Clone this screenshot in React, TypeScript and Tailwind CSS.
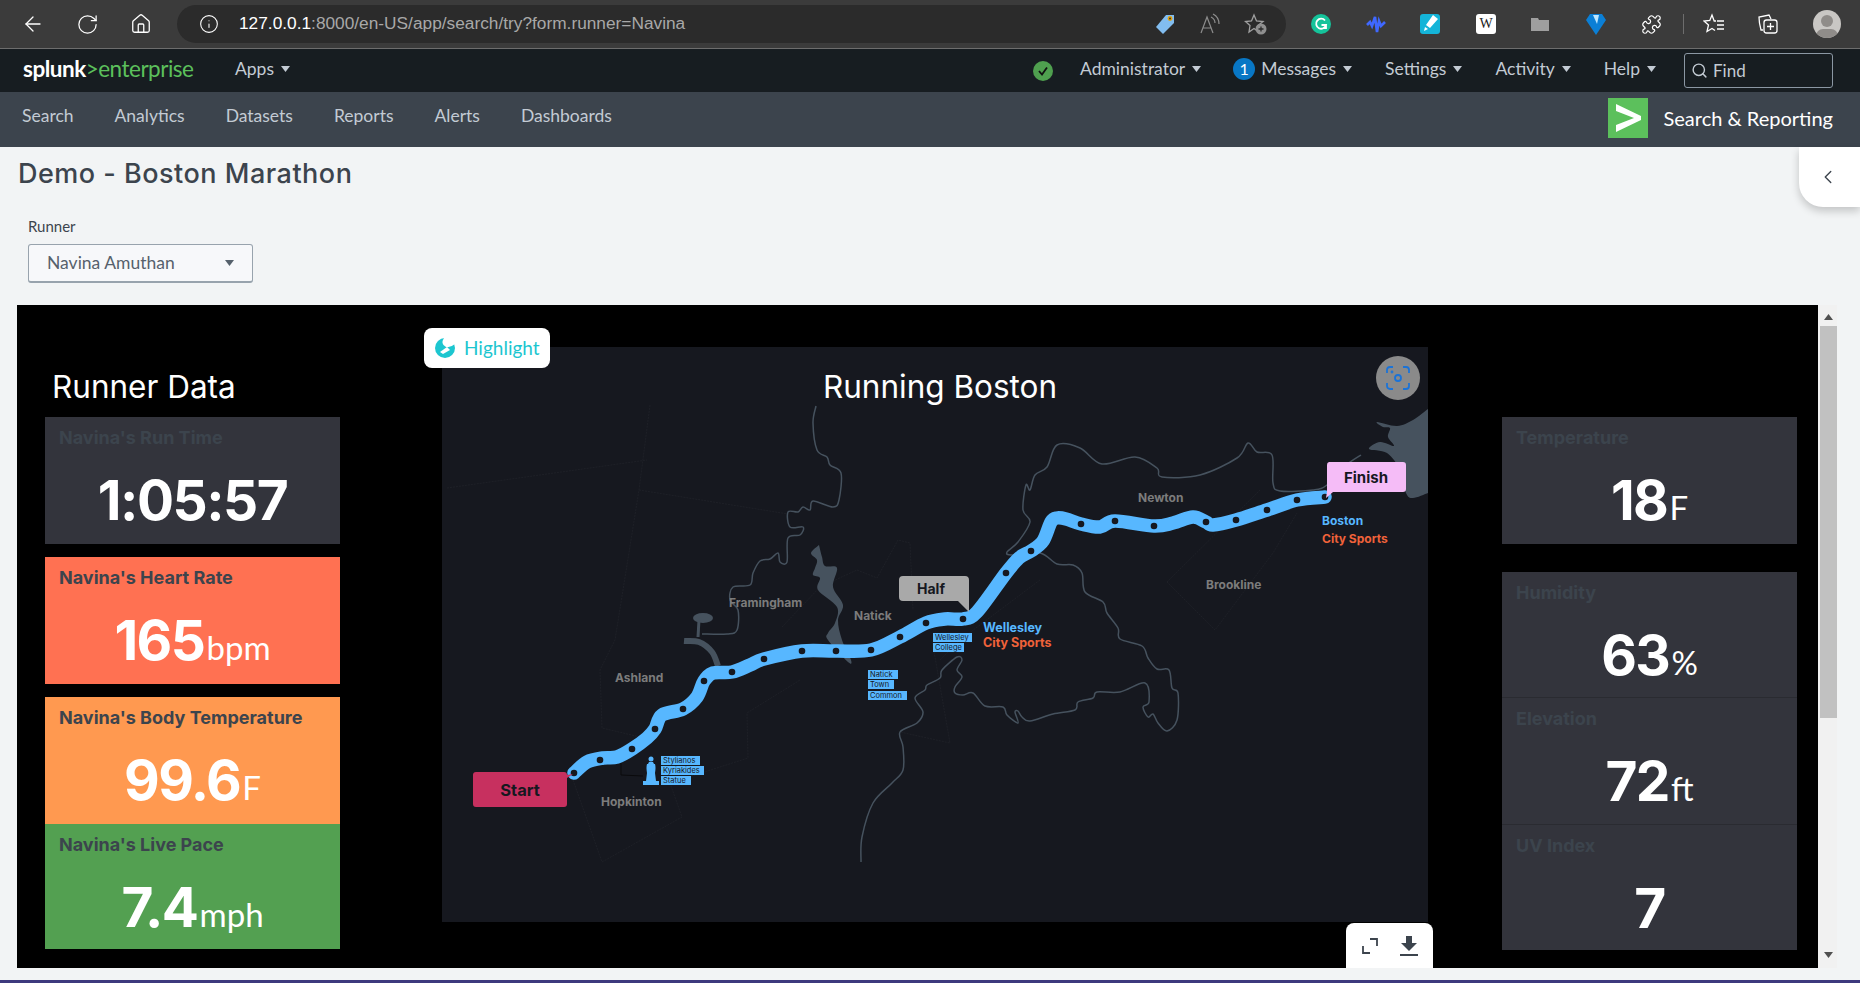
import React from "react";
import { ArrowLeft, RotateCw, House, Info, Search, ChevronLeft, Puzzle } from "lucide-react";

type P = [number, number];

function smooth(pts: P[]): string {
  let d = `M${pts[0][0]} ${pts[0][1]}`;
  for (let i = 0; i < pts.length - 1; i++) {
    const p0 = pts[Math.max(i - 1, 0)];
    const p1 = pts[i];
    const p2 = pts[i + 1];
    const p3 = pts[Math.min(i + 2, pts.length - 1)];
    const c1x = p1[0] + (p2[0] - p0[0]) / 6;
    const c1y = p1[1] + (p2[1] - p0[1]) / 6;
    const c2x = p2[0] - (p3[0] - p1[0]) / 6;
    const c2y = p2[1] - (p3[1] - p1[1]) / 6;
    d += ` C${c1x.toFixed(1)} ${c1y.toFixed(1)} ${c2x.toFixed(1)} ${c2y.toFixed(1)} ${p2[0]} ${p2[1]}`;
  }
  return d;
}

const route: P[] = [
  [574, 773], [587, 762], [603, 758], [617, 757], [632, 749], [647, 738], [655, 729], [662, 715], [683, 709], [697, 697], [704, 681], [713, 673], [732, 672], [750, 665], [764, 659], [802, 651], [836, 651], [871, 650], [900, 637], [926, 623], [945, 619], [963, 619], [977, 612], [1006, 573], [1019, 558], [1031, 551], [1043, 541], [1051, 522], [1057, 518], [1066, 519], [1081, 524], [1100, 527], [1115, 521], [1154, 526], [1173, 523], [1193, 517], [1206, 522], [1213, 525], [1236, 520], [1267, 510], [1297, 500], [1325, 497],
];
const dots: P[] = [
  [574, 773], [600, 760], [632, 749], [655, 729], [683, 709], [704, 681], [732, 672], [764, 659], [802, 651], [836, 651], [871, 650], [900, 637], [926, 623], [963, 619], [1006, 573], [1031, 551], [1081, 524], [1115, 521], [1154, 526], [1206, 522], [1236, 520], [1267, 510], [1297, 500], [1325, 497],
];
const riverA: P[] = [
  [816, 406], [813, 423], [817, 450], [827, 457], [830, 465], [841, 473], [839, 500], [833, 507], [813, 501], [810, 510], [803, 507], [798, 512], [788, 512], [790, 527], [803, 527], [800, 535], [788, 538], [787, 562], [780, 562], [778, 553], [770, 559], [760, 561], [753, 573], [750, 585], [733, 587], [730, 600], [738, 610], [737, 630], [727, 634], [702, 634],
];
const riverB: P[] = [
  [1361, 455], [1345, 466], [1327, 485], [1313, 490], [1280, 491], [1273, 483], [1272, 455], [1257, 452], [1248, 443], [1237, 458], [1200, 475], [1162, 477], [1157, 468], [1135, 457], [1102, 464], [1080, 448], [1057, 445], [1047, 467], [1035, 475], [1030, 490], [1026, 485], [1023, 510], [1030, 522], [1018, 542], [1007, 552], [1012, 555], [1040, 553], [1057, 564], [1073, 565], [1082, 573], [1085, 592], [1103, 602], [1107, 613], [1118, 628], [1120, 639], [1142, 646], [1148, 658], [1157, 669], [1169, 670], [1172, 688], [1178, 693], [1177, 720], [1167, 731], [1158, 723], [1153, 714], [1148, 717], [1143, 707], [1149, 702], [1145, 683], [1120, 692], [1097, 692], [1093, 698], [1078, 702], [1075, 710], [1053, 714], [1030, 721], [1022, 717], [1018, 711], [1015, 712], [1018, 723], [1007, 715], [1003, 707], [985, 706], [973, 693], [963, 695], [955, 693], [955, 687], [962, 677], [957, 670], [962, 660], [957, 657], [942, 670], [940, 678], [927, 685], [925, 690], [915, 698], [923, 712], [917, 723], [900, 732], [903, 747], [903, 770], [892, 783], [873, 803], [862, 837], [861, 862],
];
const lake: P[] = [
  [819, 545], [811, 553], [817, 560], [815, 568], [813, 575], [820, 578], [818, 590], [837, 607], [835, 623], [828, 633], [828, 640], [848, 662], [851, 660], [842, 640], [838, 620], [843, 605], [833, 587], [837, 568], [825, 566], [822, 557], [819, 545],
];
const bay: P[] = [
  [1428, 409], [1413, 420], [1397, 426], [1377, 422], [1383, 427], [1390, 428], [1388, 437], [1394, 446], [1380, 442], [1369, 449], [1387, 453], [1400, 470], [1406, 493], [1413, 498], [1428, 493],
];
const faint: P[][] = [
  [[447, 488], [647, 460]],
  [[650, 405], [639, 490], [615, 640], [600, 670], [602, 728], [640, 737]],
  [[639, 490], [788, 514]],
  [[782, 627], [820, 587], [857, 570], [877, 578], [898, 540], [910, 543], [913, 610]],
  [[573, 780], [602, 862], [682, 817], [670, 783], [748, 758], [747, 713], [800, 680]],
  [[1167, 582], [1215, 630], [1273, 553], [1297, 513]],
  [[1167, 582], [1260, 490]],
  [[1040, 580], [960, 640], [940, 660]],
  [[932, 640], [950, 743], [900, 732]],
];
const cityLabels: [string, number, number][] = [
  ["Framingham", 729, 607], ["Natick", 854, 620], ["Ashland", 615, 682], ["Hopkinton", 601, 806], ["Newton", 1138, 502], ["Brookline", 1206, 589],
];
const tinyLabels: [string, number, number, number][] = [
  ["Wellesley", 933, 633, 39], ["College", 933, 643, 31], ["Natick", 868, 670, 30], ["Town", 868, 680, 26], ["Common", 868, 691, 39], ["Stylianos", 661, 756, 39], ["Kyriakides", 661, 766, 43], ["Statue", 661, 776, 30],
];

function MapArt() {
  const inter = { fontFamily: "Inter, sans-serif" };
  return (
    <svg viewBox="442 347 986 575" className="block w-full h-full" style={inter}>
      {faint.map((f, i) => (
        <polyline key={i} points={f.map((p) => p.join(",")).join(" ")} fill="none" stroke="#1e2027" strokeWidth="1" strokeDasharray="2 1" />
      ))}
      <polyline points="621,757 621,775 643,776" fill="none" stroke="#0a0a0c" strokeWidth="1" />
      <path d={smooth(riverA)} fill="none" stroke="#46525e" strokeWidth="1.5" />
      <path d={smooth(riverB)} fill="none" stroke="#46525e" strokeWidth="1.5" />
      <ellipse cx="703" cy="618" rx="10" ry="5" fill="#46525e" />
      <path d="M699 620 L698 637" fill="none" stroke="#46525e" strokeWidth="3" />
      <path d={smooth([[684, 641], [699, 642], [712, 652], [718, 666]])} fill="none" stroke="#46525e" strokeWidth="6" />
      <path d={`${smooth(lake)}Z`} fill="#46525e" />
      <path d={`${smooth(bay)}Z`} fill="#46525e" />
      <text x="940" y="398" textAnchor="middle" fill="#ffffff" fontSize="31.5">Running Boston</text>
      <path d={smooth(route)} fill="none" stroke="#57b7ff" strokeWidth="13.5" strokeLinecap="round" strokeLinejoin="round" />
      {dots.map((d, i) => (
        <circle key={i} cx={d[0]} cy={d[1]} r="3.3" fill="#16181f" />
      ))}
      {cityLabels.map(([t, x, y]) => (
        <text key={t} x={x} y={y} fill="#7c7c7c" fontSize="12" fontWeight="700">{t}</text>
      ))}
      <text x="1322" y="525" fill="#57b7ff" fontSize="12" fontWeight="700">Boston</text>
      <text x="1322" y="543" fill="#f0623a" fontSize="12" fontWeight="700">City Sports</text>
      <text x="983" y="632" fill="#57b7ff" fontSize="12.5" fontWeight="700">Wellesley</text>
      <text x="983" y="647" fill="#f0623a" fontSize="12.5" fontWeight="700">City Sports</text>
      {tinyLabels.map(([t, x, y, w]) => (
        <g key={t + y}>
          <rect x={x} y={y} width={w} height="9" fill="#57b7ff" />
          <text x={x + 2} y={y + 7} fill="#16181f" fontSize="7.5">{t}</text>
        </g>
      ))}
      <circle cx="651" cy="759" r="2.5" fill="#57b7ff" />
      <path d="M649 762 h4 l1 2 h1 q1 3 0 9 l1 8 h3 v4 h-16 v-4 h3 l1 -8 q-1 -6 0 -9 h1z" fill="#57b7ff" />
      <path d="M903 576 h62 a4 4 0 0 1 4 4 v32 l-11 -11 h-55 a4 4 0 0 1 -4 -4 v-17 a4 4 0 0 1 4 -4z" fill="#a9a9a9" />
      <text x="931" y="594" textAnchor="middle" fill="#16181f" fontSize="14" fontWeight="700">Half</text>
      <path d="M1329 462 h74 a3 3 0 0 1 3 3 v24 a3 3 0 0 1 -3 3 h-70 l-7 6 l1 -6 v-27 a3 3 0 0 1 2 -3z" fill="#f5bcf7" />
      <text x="1366" y="483" textAnchor="middle" fill="#16181f" fontSize="15" fontWeight="700">Finish</text>
      <path d="M476 772 h88 a3 3 0 0 1 3 3 l6 -1 l-6 4 v26 a3 3 0 0 1 -3 3 h-88 a3 3 0 0 1 -3 -3 v-29 a3 3 0 0 1 3 -3z" fill="#c7305f" />
      <text x="520" y="796" textAnchor="middle" fill="#16181f" fontSize="16.5" fontWeight="700">Start</text>
    </svg>
  );
}

function Caret({ className = "" }: { className?: string }) {
  return (
    <svg width="9" height="6" viewBox="0 0 9 6" className={className}>
      <path d="M0 0 H9 L4.5 6Z" fill="currentColor" />
    </svg>
  );
}

function TopItem({ label }: { label: string }) {
  return (
    <div className="flex items-center gap-[7px]">
      <span>{label}</span>
      <Caret />
    </div>
  );
}

function Card({ title, value, unit, bg, extra = "", h = "h-[127px]" }: { title: string; value: string; unit?: string; bg: string; extra?: string; h?: string }) {
  return (
    <div className={`${h} px-[14px] pt-[9px] ${bg} ${extra}`}>
      <div className="text-[18px] leading-[24px] font-bold text-[#3c444d] font-['Inter',sans-serif]">{title}</div>
      <div className="mt-[15px] text-center text-white leading-[70px] whitespace-nowrap">
        <span className="text-[55px] font-bold tracking-[-1.5px] font-['Inter',sans-serif]">{value}</span>
        {unit && <span className="ml-[2px] text-[33px] font-normal">{unit}</span>}
      </div>
    </div>
  );
}

function BrowserBar() {
  return (
    <div className="h-[49px] shrink-0 bg-[#3b3b3b] border-b border-[#6d6d6d] flex items-center text-white">
      <div className="flex items-center w-[177px] pl-[21px] gap-[31px]">
        <ArrowLeft size={24} strokeWidth={1.3} />
        <RotateCw size={23} strokeWidth={1.3} />
        <House size={22} strokeWidth={1.4} />
      </div>
      <div className="w-[1109px] h-[38px] rounded-full bg-[#2b2b2b] flex items-center pl-[22px] pr-[18px]">
        <Info size={20} strokeWidth={1.3} />
        <div className="ml-[20px] text-[17.3px] leading-none whitespace-nowrap font-['Liberation_Sans',sans-serif]">
          <span className="text-white">127.0.0.1</span>
          <span className="text-[#a8a8a8]">:8000/en-US/app/search/try?form.runner=Navina</span>
        </div>
        <div className="ml-auto flex items-center gap-[23px]">
          <svg width="22" height="24" viewBox="0 0 22 24">
            <path d="M12 3 L20 3 L20 11 L9 22 L2 15Z" fill="#82bdf0" />
            <circle cx="16" cy="6.5" r="2.4" fill="#e3a008" />
            <circle cx="16" cy="6.5" r="1" fill="#333" />
          </svg>
          <svg width="22" height="22" viewBox="0 0 22 22" fill="none" stroke="#8d8d8d" strokeWidth="1.2">
            <path d="M2 20 L8 4 L14 20 M4.5 15 H11.5" />
            <path d="M12 4 Q16 6 16 10 M14 1 Q20 4 20 11" />
          </svg>
          <svg width="24" height="24" viewBox="0 0 24 24" fill="none" stroke="#a0a0a0" strokeWidth="1.3">
            <path d="M10 3 L12.5 9 L19 9.5 L14 13.5 L15 20 L10 16.5 L5 20 L6 13.5 L1.5 9.5 L7.5 9Z" />
            <circle cx="17" cy="17" r="5.5" fill="#8f8f8f" stroke="none" />
            <path d="M14.5 17 H19.5 M17 14.5 V19.5" stroke="#2b2b2b" />
          </svg>
        </div>
      </div>
      <div className="relative flex-1 flex items-center h-full pl-[25px]">
        <svg width="20" height="20" viewBox="0 0 20 20" className="mr-[35px]">
          <circle cx="10" cy="10" r="10" fill="#15c39a" />
          <path d="M14 6.5 A5 5 0 1 0 15 11 H10.5 M15 11 L15 15" fill="none" stroke="#fff" strokeWidth="1.8" />
        </svg>
        <svg width="20" height="20" viewBox="0 0 20 20" className="mr-[34px]">
          <path d="M1 11 L4 8 L6 12 L9 3 L11 18 L13 7 L15 12 L19 8" fill="none" stroke="#3f68ff" strokeWidth="2.6" />
        </svg>
        <svg width="20" height="20" viewBox="0 0 20 20" className="mr-[36px]">
          <rect width="20" height="20" rx="3" fill="#14b4d8" />
          <path d="M13 1 L18 5 L10 14 L6 11Z M5 13 L8 15 L4 17Z" fill="#fff" />
        </svg>
        <div className="mr-[35px] w-[20px] h-[20px] rounded-[3px] bg-white text-[#222] text-[14px] leading-[20px] text-center font-['Liberation_Serif',serif]">W</div>
        <svg width="18" height="14" viewBox="0 0 18 14" className="mr-[37px]">
          <path d="M0 1 H7 L8 3 H18 V14 H0Z" fill="#9f9f9f" />
        </svg>
        <svg width="20" height="24" viewBox="0 0 20 24" className="mr-[35px]">
          <path d="M4 2 H16 L20 8 L10 23 L0 8Z" fill="#0b7fd6" />
          <path d="M7 3 H13 L11 12Z" fill="#bfe7ff" />
        </svg>
        <Puzzle size={21} strokeWidth={1.4} className="mr-[21px]" />
        <div className="w-px h-[20px] bg-[#6d6d6d] mr-[19px]" />
        <svg width="22" height="22" viewBox="0 0 22 22" fill="none" stroke="#fff" strokeWidth="1.3" className="mr-[32px]">
          <path d="M13 8 H11.2 L9 2 L6.8 7.5 L1 8 L5.5 12 L4 18.5 L9 15.5 L12 17.5" />
          <path d="M14 8 H21 M14 12 H21 M14 16 H21" />
        </svg>
        <svg width="22" height="22" viewBox="0 0 22 22" fill="none" stroke="#fff" strokeWidth="1.3" className="mr-[34px]">
          <path d="M6 17 H4 Q2 10 2 4 L12 2 L14 6" />
          <rect x="7" y="7" width="13" height="13" rx="2.5" />
          <path d="M13.5 10 V17 M10 13.5 H17" />
        </svg>
        <div className="w-[28px] h-[28px] rounded-full bg-[#c9c7c4] overflow-hidden relative">
          <div className="absolute left-[8px] top-[5px] w-[12px] h-[12px] rounded-full bg-[#8f8c89]" />
          <div className="absolute left-[3px] top-[19px] w-[22px] h-[14px] rounded-full bg-[#8f8c89]" />
        </div>
      </div>
    </div>
  );
}

export default function App() {
  return (
    <div className="w-[1860px] h-[983px] overflow-hidden flex flex-col bg-[#f2f4f5] font-['Lato',sans-serif]">
      <BrowserBar />
      <div className="h-[43px] shrink-0 bg-[#171d21] flex items-center pb-[3px] text-[#c3cbd4] text-[17.5px]">
        <div className="ml-[23px] w-[212px] text-[22.5px] leading-none tracking-[-0.5px] whitespace-nowrap">
          <span className="font-bold text-white">splunk</span>
          <span className="text-[#5cc05c]">&gt;enterprise</span>
        </div>
        <TopItem label="Apps" />
        <div className="ml-auto flex items-center">
          <svg width="20" height="20" viewBox="0 0 20 20" className="mr-[27px] mt-[3px]">
            <circle cx="10" cy="10" r="10" fill="#4fa04f" />
            <path d="M6 10 L9 13.5 L14 6.5" fill="none" stroke="#111" strokeWidth="1.8" />
          </svg>
          <TopItem label="Administrator" />
          <div className="ml-[32px] mr-[6px] w-[22px] h-[22px] rounded-full bg-[#0877c5] text-white text-center leading-[22px] text-[16px]">1</div>
          <TopItem label="Messages" />
          <div className="w-[33px]" />
          <TopItem label="Settings" />
          <div className="w-[33px]" />
          <TopItem label="Activity" />
          <div className="w-[33px]" />
          <TopItem label="Help" />
          <div className="ml-[28px] mr-[27px] mt-[3px] w-[149px] h-[35px] border border-[#8b97a3] rounded-[3px] flex items-center pl-[6px] gap-[5px] text-[17px]">
            <Search size={17} strokeWidth={2} />
            <span>Find</span>
          </div>
        </div>
      </div>
      <div className="h-[55px] shrink-0 bg-[#3c444d] flex items-center pl-[22px] pr-[27px] pb-[4px] text-[#c3cbd4] text-[17.5px]">
        <div className="flex items-center gap-[41px] pb-[3px]">
          <span>Search</span>
          <span>Analytics</span>
          <span>Datasets</span>
          <span>Reports</span>
          <span>Alerts</span>
          <span>Dashboards</span>
        </div>
        <div className="ml-auto flex items-center gap-[16px]">
          <svg width="40" height="40" viewBox="0 0 40 40">
            <rect width="40" height="40" fill="#5cc05c" />
            <path d="M8 6 L33 18 V22 L8 34 V27 L26 20 L8 13Z" fill="#ffffff" />
          </svg>
          <span className="text-[20px] text-white">Search &amp; Reporting</span>
        </div>
      </div>

      <div className="relative flex-1 flex flex-col">
        <div className="absolute right-0 top-0 w-[61px] h-[60px] bg-white rounded-bl-[24px] shadow-[0_4px_8px_rgba(0,0,0,0.2)] flex items-center pl-[18px] text-[#3c444d]">
          <ChevronLeft size={22} strokeWidth={1.5} />
        </div>
        <h1 className="h-[56px] pl-[18px] pt-[6px] text-[27px] tracking-[0.5px] leading-[42px] font-medium text-[#3c444d] font-['Inter',sans-serif]">Demo - Boston Marathon</h1>
        <div className="pl-[28px] h-[41px] pt-[14px] text-[15px] leading-[18px] text-[#3c444d]">Runner</div>
        <div className="ml-[28px] w-[225px] h-[39px] border border-[#98a3ad] border-b-2 rounded-[3px] bg-[#f7f8fa] flex items-center justify-between pl-[18px] pr-[18px] text-[17.5px] text-[#56616c]">
          <span>Navina Amuthan</span>
          <Caret className="text-[#56616c]" />
        </div>
        <div className="mt-[22px] ml-[17px] flex h-[663px]">
          <div className="relative w-[1801px] bg-black flex">
            <div className="ml-[28px] w-[295px]">
              <div className="h-[112px] pt-[60px] pl-[7px] text-[31.5px] leading-[44px] text-white font-['Inter',sans-serif]">Runner Data</div>
              <Card title="Navina's Run Time" value="1:05:57" bg="bg-[#33343c]" />
              <Card title="Navina's Heart Rate" value="165" unit="bpm" bg="bg-[#ff7152]" extra="mt-[13px]" />
              <Card title="Navina's Body Temperature" value="99.6" unit="F" bg="bg-[#ff9950]" extra="mt-[13px]" />
              <Card title="Navina's Live Pace" value="7.4" unit="mph" bg="bg-[#53a051]" h="h-[125px]" />
            </div>
            <div className="relative ml-[102px] mt-[42px] w-[986px] h-[575px] bg-[#16181f]">
              <MapArt />
              <div className="absolute left-[-18px] top-[-19px] w-[126px] h-[40px] rounded-[8px] bg-white flex items-center pl-[11px] gap-[9px] text-[19px] text-[#1cc6d0]">
                <svg width="20" height="20" viewBox="0 0 20 20">
                  <circle cx="10" cy="10" r="10" fill="#1cc6d0" />
                  <path d="M9 0 Q5 6 11 9 Q15 10 20 6 L20 0Z" fill="#ffffff" />
                  <path d="M5 14 L12 9 L15 12 L8 16Z" fill="#ffffff" />
                </svg>
                <span>Highlight</span>
              </div>
              <div className="absolute left-[934px] top-[9px] w-[44px] h-[44px] rounded-full bg-[#8a8a8a] flex items-center justify-center">
                <svg width="24" height="24" viewBox="0 0 24 24" fill="none" stroke="#1a73d8" strokeWidth="1.8">
                  <path d="M1 7 V4 a3 3 0 0 1 3 -3 H7 M17 1 H20 a3 3 0 0 1 3 3 V7 M23 17 V20 a3 3 0 0 1 -3 3 H17 M7 23 H4 a3 3 0 0 1 -3 -3 V17" />
                  <circle cx="12" cy="12" r="3" />
                  <circle cx="6" cy="6" r="0.5" />
                </svg>
              </div>
              <div className="absolute left-[904px] top-[576px] w-[87px] h-[45px] rounded-t-[8px] bg-white flex items-center justify-center gap-[20px] text-[#3c444d]">
                <svg width="18" height="18" viewBox="0 0 18 18" fill="none" stroke="currentColor" strokeWidth="1.8">
                  <path d="M9 2 H16 V9 M2 9 V16 H9" />
                </svg>
                <svg width="20" height="22" viewBox="0 0 20 22" fill="currentColor">
                  <path d="M7 1 H13 V8 H18 L10 16 L2 8 H7Z" />
                  <rect x="1" y="19" width="18" height="2" />
                </svg>
              </div>
            </div>
            <div className="ml-[74px] w-[295px] pt-[112px]">
              <Card title="Temperature" value="18" unit="F" bg="bg-[#33343c]" />
              <Card title="Humidity" value="63" unit="%" bg="bg-[#33343c]" extra="mt-[28px]" h="h-[125px]" />
              <Card title="Elevation" value="72" unit="ft" bg="bg-[#33343c]" extra="border-t border-[#2a2b31]" />
              <Card title="UV Index" value="7" bg="bg-[#33343c]" extra="border-t border-[#2a2b31]" h="h-[126px]" />
            </div>
          </div>
          <div className="w-[19px] pl-[2px] bg-[#f1f1f1] flex flex-col items-center pt-[9px] text-[#505050]">
            <Caret className="rotate-180" />
            <div className="mt-[6px] w-full h-[392px] bg-[#c1c1c1]" />
            <Caret className="mt-[234px]" />
          </div>
        </div>
        <div className="mt-auto h-[3px] bg-[#3d3a7e]" />
      </div>
    </div>
  );
}
